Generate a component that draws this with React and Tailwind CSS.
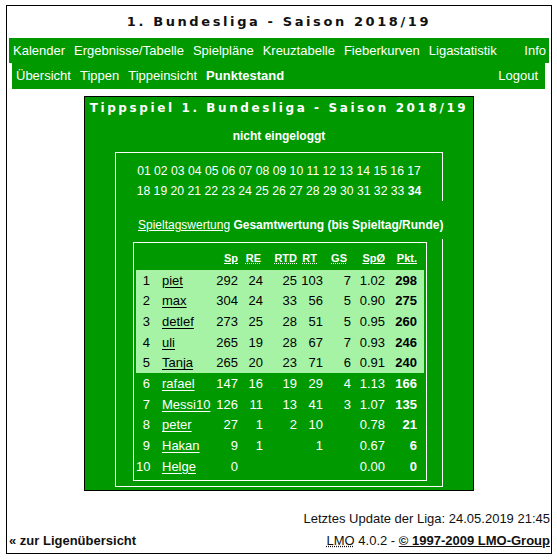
const rows = [
  [1, "piet", 292, 24, 25, 103, 7, "1.02", 298],
  [2, "max", 304, 24, 33, 56, 5, "0.90", 275],
  [3, "detlef", 273, 25, 28, 51, 5, "0.95", 260],
  [4, "uli", 265, 19, 28, 67, 7, "0.93", 246],
  [5, "Tanja", 265, 20, 23, 71, 6, "0.91", 240],
  [6, "rafael", 147, 16, 19, 29, 4, "1.13", 166],
  [7, "Messi10", 126, 11, 13, 41, 3, "1.07", 135],
  [8, "peter", 27, 1, 2, 10, "", "0.78", 21],
  [9, "Hakan", 9, 1, "", 1, "", "0.67", 6],
  [10, "Helge", 0, "", "", "", "", "0.00", 0],
];

const days1 = ["01", "02", "03", "04", "05", "06", "07", "08", "09", "10", "11", "12", "13", "14", "15", "16", "17"];
const days2 = ["18", "19", "20", "21", "22", "23", "24", "25", "26", "27", "28", "29", "30", "31", "32", "33"];

function Row({ r, light }) {
  const [rank, name, sp, re, rtd, rt, gs, avg, pkt] = r;
  return (
    <div className={light ? "flex h-[20.7px] items-center text-black" : "flex h-[20.7px] items-center text-white"}>
      <span className="w-[14px] text-right">{rank}</span>
      <span className="w-[60px] pl-[12px]">
        <span className="underline underline-offset-2">{name}</span>
      </span>
      <span className="w-[28px] text-right">{sp}</span>
      <span className="w-[25px] text-right">{re}</span>
      <span className="w-[34px] text-right">{rtd}</span>
      <span className="w-[26px] text-right">{rt}</span>
      <span className="w-[28px] text-right">{gs}</span>
      <span className="w-[34px] text-right">{avg}</span>
      <span className="w-[32px] text-right font-bold">{pkt}</span>
    </div>
  );
}

function Table() {
  return (
    <div className="mt-[3px] ml-[17px] h-[239px] w-[294px] border border-white px-[2px] text-[13px]">
      <div className="flex h-[27px] pt-[5px] text-[11px] leading-[20px] font-bold text-white">
        <span className="w-[74px]"></span>
        <span className="w-[28px] text-right"><span className="underline">Sp</span></span>
        <span className="w-[25px] pr-[2px] text-right"><span className="underline decoration-dotted">RE</span></span>
        <span className="w-[34px] text-right"><span className="underline decoration-dotted">RTD</span></span>
        <span className="w-[26px] pr-[6px] text-right"><span className="underline decoration-dotted">RT</span></span>
        <span className="w-[28px] pr-[4px] text-right"><span className="underline decoration-dotted">GS</span></span>
        <span className="w-[34px] text-right"><span className="underline">SpØ</span></span>
        <span className="w-[32px] text-right"><span className="underline">Pkt.</span></span>
      </div>
      <div className="bg-[#a6f3a6]">
        {rows.slice(0, 5).map((r) => (
          <Row key={r[0]} r={r} light />
        ))}
      </div>
      {rows.slice(5).map((r) => (
        <Row key={r[0]} r={r} />
      ))}
    </div>
  );
}

function App() {
  return (
    <div className="h-[560px] w-[557px] overflow-hidden bg-white pt-[5px] pl-[6px] font-['Liberation_Sans',Arial,sans-serif]">
      <div className="h-[549px] w-[546px] border border-black">
        <div className="flex h-[32px] items-center justify-center font-['DejaVu_Sans',Verdana,sans-serif] text-[13px] font-bold tracking-[2.6px] text-[#111]">
          1. Bundesliga - Saison 2018/19
        </div>

        <div className="ml-[2px] flex h-[25px] w-[540px] items-center justify-between bg-[#009900] pr-[3px] pl-[4px] text-[13px] text-white">
          <div className="flex gap-[9px]">
            <span>Kalender</span>
            <span>Ergebnisse/Tabelle</span>
            <span>Spielpläne</span>
            <span>Kreuztabelle</span>
            <span>Fieberkurven</span>
            <span>Ligastatistik</span>
          </div>
          <span>Info</span>
        </div>
        <div className="ml-[5px] flex h-[26px] w-[533px] items-center justify-between bg-[#009900] pr-[7px] pl-[4px] text-[13px] text-white">
          <div className="flex gap-[9px]">
            <span>Übersicht</span>
            <span>Tippen</span>
            <span>Tippeinsicht</span>
            <span className="font-bold">Punktestand</span>
          </div>
          <span>Logout</span>
        </div>

        <div className="mt-[7px] ml-[77px] h-[395px] w-[390px] border border-black bg-[#009900] text-white">
          <div className="h-[22px] text-center font-['DejaVu_Sans',Verdana,sans-serif] text-[12px] leading-[22px] font-bold tracking-[2.6px]">
            Tippspiel 1. Bundesliga - Saison 2018/19
          </div>
          <div className="mt-[7px] h-[20px] text-center text-[12px] leading-[20px] font-bold">
            nicht eingeloggt
          </div>
          <div className="mt-[6px] ml-[30px] h-[335px] w-[328px] border border-white">
            <div className="h-[48px] pt-[9px] text-center text-[12.2px] leading-[19.5px]">
              <div>{days1.join(" ")}</div>
              <div>
                {days2.join(" ")} <span className="font-bold">34</span>
              </div>
            </div>
            <div className="relative -mr-[3px] h-[38px] bg-[#009900] pt-[14px] pl-[22px] text-[12px] leading-[20px] whitespace-nowrap">
              <span className="underline">Spieltagswertung</span>{" "}
              <span className="font-bold">Gesamtwertung (bis Spieltag/Runde)</span>
            </div>
            <Table />
          </div>
        </div>

        <div className="mt-[18px] pr-[1px] text-right text-[13px] leading-[20px] text-[#111]">
          Letztes Update der Liga: 24.05.2019 21:45
        </div>
        <div className="mt-[2px] flex justify-between pr-[1px] pl-[2px] text-[13px] leading-[20px] text-[#111]">
          <span className="font-bold">« zur Ligenübersicht</span>
          <span>
            <span className="underline decoration-dotted">LMO</span> 4.0.2 -{" "}
            <span className="font-bold underline">© 1997-2009 LMO-Group</span>
          </span>
        </div>
      </div>
    </div>
  );
}

export default App;
